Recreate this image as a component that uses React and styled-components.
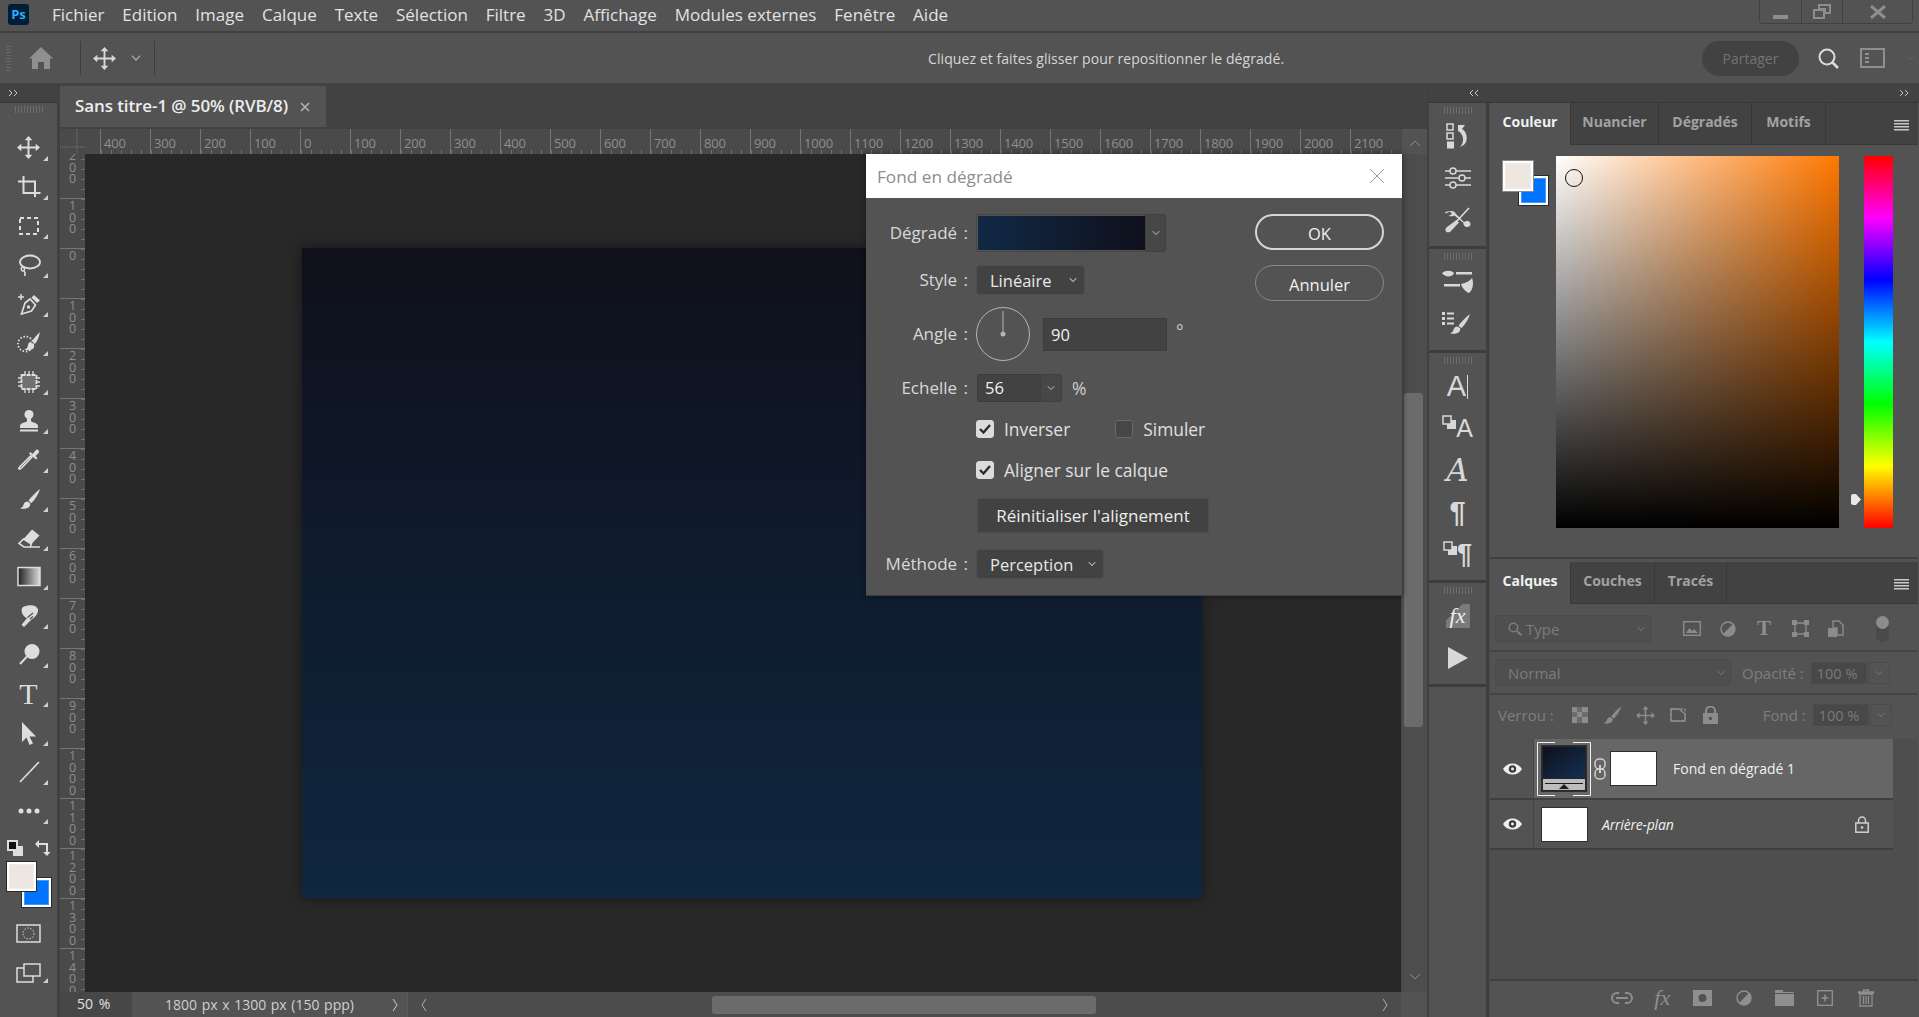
import React from 'react';
import styled, { createGlobalStyle, css } from 'styled-components';

const Global = createGlobalStyle`
  html, body { margin: 0; padding: 0; background: #535353; }
  * { box-sizing: border-box; }
  body { font-family: "Open Sans", "Noto Sans", "Liberation Sans", sans-serif; overflow: hidden; }
`;

const App_ = styled.div`
  position: relative; width: 1919px; height: 1017px; overflow: hidden;
  display: flex; flex-direction: column; background: #535353; color: #ddd;
`;

/* ---------- menu bar ---------- */
const MenuBar = styled.div`
  height: 33px; flex: none; display: flex; align-items: flex-start; padding-left: 8px;
  background: #535353; border-bottom: 2px solid #404040;
`;
const Logo = styled.div`
  width: 21px; height: 21px; margin: 4px 23px 0 0; border-radius: 3px; background: #001e36;
  color: #31a8ff; font: 700 13px/21px "Open Sans", sans-serif; text-align: center;
`;
const MenuList = styled.div`display: flex; gap: 17.9px; height: 29px; align-items: center;`;
const MenuItem = styled.span`font-size: 17px; color: #e2e2e2; line-height: 29px;`;
const WinControls = styled.div`
  margin-left: auto; margin-right: 6px; display: flex; height: 24px;
  border: 1px solid #404040; border-top: 0; border-radius: 0 0 4px 4px;
`;
const WinBtn = styled.div`
  width: ${p => p.$w}px; display: flex; align-items: center; justify-content: center;
  color: #8e8e8e; & + & { border-left: 1px solid #404040; }
`;

/* ---------- options bar ---------- */
const OptionsBar = styled.div`
  height: 51px; flex: none; display: flex; align-items: center; padding: 0 5px 0 6px;
  background: #535353; border-bottom: 1px solid #454545;
`;
const GripV = styled.div`
  width: 5px; height: 26px;
  background: repeating-linear-gradient(0deg, #6a6a6a 0 1px, transparent 1px 3px);
`;
const OptIcon = styled.div`
  margin-left: ${p => p.$ml}px; display: flex; align-items: center; color: ${p => p.$c || '#d8d8d8'};
`;
const OptSep = styled.div`margin-left: ${p => p.$ml}px; width: 1px; height: 34px; background: #3d3d3d;`;
const Hint = styled.div`margin-left: 773px; font-size: 14px; letter-spacing: 0.08px; color: #d6d6d6; white-space: nowrap;`;
const Share = styled.div`
  margin-left: auto; width: 97px; height: 35px; border-radius: 18px; background: #424242;
  color: #727272; font-size: 14px; display: flex; align-items: center; justify-content: center;
`;

/* ---------- workspace ---------- */
const Workspace = styled.div`flex: 1; min-height: 0; display: flex;`;
const LeftDock = styled.div`
  width: 60px; flex: none; display: flex; flex-direction: column; border-right: 3px solid #404040;
`;
const CollapseBar = styled.div`
  height: ${p => p.$h || 19}px; flex: none; background: #424242; color: #c8c8c8; display: flex; align-items: center;
  justify-content: ${p => p.$between ? 'space-between' : 'flex-start'}; padding: ${p => p.$pad || '0 0 0 8px'};
  border-bottom: 1px solid #383838;
`;
const ToolBar = styled.div`flex: 1; display: flex; flex-direction: column; align-items: center; background: #535353;`;
const Grip = styled.div`
  flex: none; height: ${p => p.$h}px; width: 28px; position: relative;
  &::after {
    content: ""; position: absolute; left: 0; right: 0; top: ${p => p.$top}px; height: 7px;
    background: repeating-linear-gradient(90deg, #6c6c6c 0 1px, transparent 1px 3px);
  }
`;
const Tool = styled.div`
  position: relative; width: 57px; height: 39px; flex: none; display: flex; align-items: center; justify-content: center;
  color: #dddddd;
  &::after {
    content: ""; position: absolute; left: 43px; top: 28px; width: 0; height: 0;
    border-left: 5px solid transparent; border-bottom: 5px solid #cfcfcf;
  }
`;
const Svg = styled.svg`display: block; flex: none; fill: currentColor;`;
const ToolGlyph = styled.span`font: 400 ${p => p.$s || 28}px/1 "Liberation Serif", serif; color: #dddddd;`;
const DefaultRow = styled.div`
  width: 44px; height: 16px; margin-top: 10px; flex: none; display: flex; justify-content: space-between; color: #ddd;
`;
const SwatchStack = styled.div`position: relative; width: 44px; height: 45px; margin-top: 6px; flex: none;`;
const Swatch = styled.div`
  position: absolute; left: ${p => p.$x}px; top: ${p => p.$y}px; width: ${p => p.$s}px; height: ${p => p.$s}px;
  background: ${p => p.$c}; border: 2px solid #fff; outline: 1px solid ${p => p.$o || '#2a2a2a'};
  box-shadow: inset 0 0 0 1px rgba(255,255,255,.25);
`;
const ToolLower = styled.div`
  width: 57px; flex: none; margin-top: ${p => p.$mt}px; height: ${p => p.$h}px; position: relative;
  display: flex; justify-content: center; color: #ddd;
  ${p => p.$tri && css`
    &::after {
      content: ""; position: absolute; left: 43px; top: 15px; width: 0; height: 0;
      border-left: 5px solid transparent; border-bottom: 5px solid #cfcfcf;
    }
  `}
`;

/* ---------- document ---------- */
const DocArea = styled.div`width: 1367px; flex: none; display: flex; flex-direction: column; min-height: 0;`;
const TabBar = styled.div`height: 45px; flex: none; background: #424242; padding: 2px 0 2px 0;`;
const DocTab = styled.div`
  width: 266px; height: 41px; background: #535353; display: flex; align-items: center; padding: 0 0 2px 15px;
  font-size: 17px; font-weight: 600; letter-spacing: -0.1px; color: #ededed; white-space: nowrap;
`;
const TabClose = styled.span`margin-left: 12px; margin-top: 3px; display: flex; color: #b5b5b5;`;
const RulerRow = styled.div`height: 25px; flex: none; display: flex;`;
const RulerCorner = styled.div`width: 25px; flex: none; background: #4a4a4a;`;
const HRuler = styled.div`
  flex: 1; min-width: 0; display: flex; padding-left: 15px; background: #4a4a4a; overflow: hidden;
`;
const HCell = styled.div`
  width: 50px; height: 25px; flex: none; padding-left: 3px; border-left: 1px solid #757575; font-size: 13px; line-height: 29px;
  letter-spacing: -0.2px; color: #8e8e8e;
  background: linear-gradient(90deg, #6f6f6f 1px, transparent 1px) left bottom / 10px 4px repeat-x;
`;
const ScrollCap = styled.div`
  width: 26px; flex: none; background: #535353; color: #8c8c8c; display: flex; align-items: center; justify-content: center;
  border-left: 1px solid #474747; padding-top: 3px;
`;
const DocMiddle = styled.div`flex: 1; min-height: 0; display: flex;`;
const VRuler = styled.div`width: 25px; flex: none; background: #4a4a4a; overflow: hidden;`;
const VRulerTrack = styled.div`margin-top: -6px;`;
const VCell = styled.div`
  height: 50px; border-top: 1px solid #757575; padding: 1px 0 0 8px;
  background: linear-gradient(#6f6f6f 1px, transparent 1px) right 0 / 4px 10px repeat-y;
`;
const VLabel = styled.div`
  width: 9px; word-break: break-all; text-align: center; font-size: 12.5px; line-height: 11.5px; color: #8e8e8e;
`;
const Canvas = styled.div`flex: 1; min-width: 0; background: #282828;`;
const Page = styled.div`
  width: 900px; height: 650px; margin: 94px 0 0 217px;
  background: linear-gradient(#0f101b, #0f2740);
  box-shadow: 0 0 12px rgba(0,0,0,.45);
`;
const VScroll = styled.div`
  width: 26px; flex: none; background: #4d4d4d; display: flex; flex-direction: column; border-left: 1px solid #474747;
  color: #8c8c8c; align-items: center; padding-bottom: 11px;
`;
const VThumb = styled.div`width: 19px; height: 334px; margin-top: 239px; margin-left: -2px; background: #6b6b6b; border-radius: 3px; flex: none;`;
const VDown = styled.div`margin-top: auto; display: flex;`;

const StatusBar = styled.div`height: 25px; flex: none; display: flex; align-items: stretch; background: #535353;`;
const ZoomBox = styled.div`
  width: 72px; flex: none; background: #474747; font-size: 14px; color: #e0e0e0; padding-left: 17px; line-height: 24px; word-spacing: 2px;
`;
const DocInfo = styled.div`
  width: 275px; flex: none; padding-left: 33px; font-size: 14px; line-height: 24px; color: #cfcfcf; white-space: nowrap; word-spacing: 1px;
  display: flex; justify-content: space-between; padding-right: 9px; align-items: center;
`;
const HTrack = styled.div`
  flex: 1; min-width: 0; display: flex; align-items: center; background: #4c4c4c; padding: 0 13px 0 13px;
  color: #b0b0b0; border-left: 1px solid #5c5c5c;
`;
const HThumb = styled.div`margin-left: 285px; width: 384px; height: 18px; background: #6b6b6b; border-radius: 3px; flex: none;`;
const HEnd = styled.div`margin-left: auto; display: flex;`;
const StatusCap = styled.div`width: 26px; flex: none; background: #535353;`;

/* ---------- dialog ---------- */
const Dialog = styled.div`
  position: absolute; left: 866px; top: 154px; width: 537px; height: 442px; background: #535353;
  border-right: 1px solid #3e3e3e; border-bottom: 1px solid #3e3e3e; box-shadow: 0 0 6px rgba(0,0,0,.4);
  display: flex; flex-direction: column;
`;
const DialogTitle = styled.div`
  height: 44px; flex: none; background: #fff; display: flex; align-items: center; justify-content: space-between;
  padding: 0 17px 0 11px; font-size: 17.2px; color: #8d8d8d;
`;
const DialogBody = styled.div`flex: 1; display: flex; justify-content: space-between; padding: 16px 18px 0 0;`;
const Form = styled.div`display: flex; flex-direction: column;`;
const Row = styled.div`
  display: grid; grid-template-columns: 110px auto; align-items: center; justify-content: start; align-content: center;
  height: ${p => p.$h}px; margin-top: ${p => p.$mt || 0}px;
`;
const Label = styled.div`
  text-align: right; padding-right: 8px; margin-top: -2px; font-size: 17px; word-spacing: 2px; color: #d8d8d8; white-space: pre;
  grid-column: 1;
`;
const Controls = styled.div`grid-column: 2; display: flex; align-items: center;`;
const GradientField = styled.div`
  width: 169px; height: 38px; border: 1px solid #474747; border-right: 0; padding: 1px 0 1px 1px; display: flex;
  &::before { content: ""; flex: 1; background: linear-gradient(90deg, #112945, #0f101c); }
`;
const DropCell = styled.div`
  width: ${p => p.$w}px; height: ${p => p.$h}px; display: flex; align-items: center; justify-content: center;
  background: #474747; border: 1px solid #3f3f3f; border-radius: 0 3px 3px 0; color: #bdbdbd;
`;
const Select = styled.div`
  width: ${p => p.$w}px; height: 30px; background: #424242; border: 1px solid #4c4c4c; border-radius: 4px;
  display: flex; align-items: center; justify-content: space-between; padding: 0 7px 0 13px; font-size: 16.5px; color: #e8e8e8;
`;
const Dial = styled.div`display: flex; color: #b5b5b5;`;
const AngleInput = styled.div`
  margin-left: 13px; width: 124px; height: 33px; background: #424242; border: 1px solid #3c3c3c;
  font-size: 16.5px; color: #f0f0f0; padding-left: 7px; line-height: 31px;
`;
const Unit = styled.div`margin-left: ${p => p.$ml}px; font-size: 17.5px; color: #cfcfcf; ${p => p.$up && 'transform: translateY(-3px);'}`;
const ScaleInput = styled.div`
  margin-left: 1px; width: 63px; height: 28px; background: #424242; border: 1px solid #3c3c3c; border-right: 0; font-size: 16.5px; color: #f0f0f0;
  padding-left: 7px; line-height: 26px; border-radius: 3px 0 0 3px;
`;
const CheckWrap = styled.div`display: flex; align-items: center; margin-left: ${p => p.$ml || 0}px; font-size: 17.4px; color: #e0e0e0; white-space: nowrap;`;
const CheckBox = styled.div`
  width: 18px; height: 18px; margin-right: 10px; border-radius: 3px; display: flex; align-items: center; justify-content: center; color: #2c2c2c;
  background: ${p => p.$on ? '#dcdcdc' : '#474747'}; border: 1px solid ${p => p.$on ? '#dcdcdc' : '#6a6a6a'};
`;
const FlatButton = styled.div`
  margin-left: 1px; width: 232px; height: 35px; background: #424242; border: 1px solid #4c4c4c; border-radius: 2px;
  display: flex; align-items: center; justify-content: center; font-size: 17px; color: #ececec; white-space: nowrap;
`;
const Actions = styled.div`display: flex; flex-direction: column; gap: 15px; width: 129px;`;
const PillButton = styled.div`
  height: 36px; border-radius: 18px; border: ${p => p.$primary ? '2px solid #d6d6d6' : '1px solid #888'};
  display: flex; align-items: center; justify-content: center; font-size: 16.5px; color: #f0f0f0; padding-top: 3px;
`;

/* ---------- right dock ---------- */
const RightDock = styled.div`
  width: 492px; flex: none; display: flex; flex-direction: column; min-height: 0; border-left: 2px solid #404040;
`;
const RightMain = styled.div`flex: 1; min-height: 0; display: flex;`;
const IconDock = styled.div`width: 57px; flex: none; display: flex; flex-direction: column; background: #535353; border-right: 0;`;
const DockSep = styled.div`width: 4px; flex: none; background: #3f3f3f; border-right: 1px solid #4a4a4a;`;
const DockGroup = styled.div`
  flex: none; display: flex; flex-direction: column; align-items: center; padding-bottom: 5px; border-bottom: 3px solid #3d3d3d;
`;
const DockItem = styled.div`
  height: 42px; width: 57px; flex: none; display: flex; align-items: center; justify-content: center; color: #d8d8d8;
`;
const RaisedGlyph = styled.span`display: flex; transform: translateY(-6px);`;
const Glyph = styled.span`
  font: ${p => p.$i ? 'italic' : 'normal'} ${p => p.$w || 400} ${p => p.$s}px/1 ${p => p.$f || '"Liberation Sans"'}, sans-serif;
  color: ${p => p.$c || '#d8d8d8'};
`;
const Caret = styled.span`display: inline-block; width: 1px; height: 24px; background: #d8d8d8; margin-left: 1px; vertical-align: -3px;`;
const FxTile = styled.div`
  display: flex; align-items: center; justify-content: center; width: 24px; height: 24px;
  background: linear-gradient(135deg, transparent 35%, #7a7a7a 35%);
`;
const Panels = styled.div`width: 428px; flex: none; display: flex; flex-direction: column; min-height: 0;`;
const PanelTabs = styled.div`height: 42px; flex: none; display: flex; background: #424242; align-items: stretch; color: #a0a0a0;`;
const PanelTab = styled.div`
  width: ${p => p.$w}px; flex: none; display: flex; align-items: center; justify-content: center; padding-bottom: 5px;
  font-size: 14px; font-weight: 700;
  background: ${p => p.$on ? '#535353' : 'transparent'}; color: ${p => p.$on ? '#f0f0f0' : '#a2a2a2'};
  border-right: 1px solid #383838; border-bottom: ${p => p.$on ? '0' : '1px solid #383838'};
`;
const TabFill = styled.div`flex: 1; display: flex; align-items: center; justify-content: flex-end; padding: 3px 9px 0 0; border-bottom: 1px solid #383838; color: #c8c8c8;`;
const ColorPanel = styled.div`
  height: 414px; flex: none; display: flex; align-items: flex-start; padding: 11px 0 0 12px; background: #535353;
  border-bottom: 2px solid #404040;
`;
const ColorSwatches = styled.div`position: relative; width: 46px; height: 46px; margin-top: 4px; flex: none;`;
const Picker = styled.div`
  position: relative; margin-left: 8px; width: 283px; height: 372px; flex: none;
  background: linear-gradient(to top, #000, transparent), linear-gradient(to right, #fff, #ff7700);
`;
const PickerDot = styled.div`
  position: absolute; left: 9px; top: 13px; width: 18px; height: 18px; border-radius: 50%;
  border: 1px solid #111; box-shadow: inset 0 0 0 1px rgba(255,255,255,.25);
`;
const HueBar = styled.div`
  position: relative; margin-left: 25px; width: 29px; height: 372px; flex: none;
  background: linear-gradient(#f00, #f0f 16.67%, #00f 33.33%, #0ff 50%, #0f0 66.67%, #ff0 83.33%, #f00);
`;
const HueMark = styled.div`position: absolute; left: -13px; top: 338px; color: #e8e8e8; display: flex;`;

const LayersPanel = styled.div`flex: 1; min-height: 0; display: flex; flex-direction: column; margin-top: 3px;`;
const LayerToolRow = styled.div`
  height: ${p => p.$h}px; flex: none; display: flex; align-items: center; padding: ${p => p.$pad || '0'} 0 ${p => p.$padb || '0'} 5px; color: #8c8c8c;
  ${p => p.$line && 'border-bottom: 2px solid #454545;'}
`;
const DimCombo = styled.div`
  width: ${p => p.$w}px; height: 27px; border: 1px solid #4b4b4b; border-radius: 3px; background: #4f4f4f;
  display: flex; align-items: center; justify-content: space-between; padding: 0 5px 0 12px; font-size: 15px; color: #7c7c7c;
`;
const ComboLead = styled.span`display: flex; align-items: center; gap: 4px;`;
const FilterIcon = styled.div`width: 36px; flex: none; display: flex; justify-content: center; margin-left: ${p => p.$ml || 0}px;`;
const Toggle = styled.div`
  position: relative; width: 13px; height: 26px; margin-left: 22px; border-radius: 7px; background: #4a4a4a;
  &::before { content: ""; position: absolute; left: 0; top: 0; width: 13px; height: 13px; border-radius: 50%; background: #8c8c8c; }
`;
const DimLabel = styled.div`margin-left: ${p => p.$ml}px; font-size: 15px; color: #7f7f7f; white-space: nowrap;`;
const DimValue = styled.div`
  margin-left: ${p => p.$ml}px; width: 56px; height: 22px; background: #484848; border: 1px solid #4c4c4c; font-size: 14.5px; line-height: 21px; padding-left: 5px;
  color: #7a7a7a; white-space: nowrap;
`;
const DimDrop = styled.div`width: 22px; height: 22px; border: 1px solid #4b4b4b; margin-left: 1px; display: flex; align-items: center; justify-content: center; color: #777;`;
const LockIcon = styled.div`width: ${p => p.$w}px; flex: none; display: flex; justify-content: center; margin-left: ${p => p.$ml || 0}px;`;

const LayerList = styled.div`flex: 1; min-height: 0; background: #4e4e4e; display: flex; flex-direction: column;`;
const LayerRow = styled.div`
  width: 403px; height: ${p => p.$h}px; flex: none; display: flex; border-bottom: 2px solid #3f3f3f;
  background: #535353;
`;
const EyeCell = styled.div`
  width: 44px; flex: none; display: flex; align-items: center; justify-content: center; padding-left: 2px; border-right: 1px solid #454545;
`;
const LayerBody = styled.div`
  flex: 1; display: flex; align-items: center; padding-left: 7px; background: ${p => p.$sel ? '#666666' : 'transparent'};
`;
const ThumbFrame = styled.div`position: relative; width: 46px; height: 47px; flex: none; border: 1px solid #2e2e2e;`;
const Corners = styled.svg`position: absolute; left: -5px; top: -4px; display: block; fill: none; stroke: #f2f2f2;`;
const WhiteThumb = styled.div`
  width: ${p => p.$w}px; height: 35px; flex: none; background: #fff; border: 1px solid #2e2e2e;
`;
const ChainCell = styled.div`margin: 0 4px 0 7px; display: flex; color: #d0d0d0;`;
const LayerName = styled.div`margin-left: ${p => p.$ml}px; font-size: 14px; color: #f0f0f0; white-space: nowrap; ${p => p.$i && 'font-style: italic; letter-spacing: -0.2px;'}`;
const RowLock = styled.div`margin-left: auto; margin-right: 24px; display: flex; color: #d0d0d0;`;
const LayerFooter = styled.div`
  height: 38px; flex: none; display: flex; justify-content: flex-end; align-items: center; padding: 0 32px 2px 0;
  background: #535353; border-top: 2px solid #404040; color: #8f8f8f;
`;
const FooterIcon = styled.div`width: 40.7px; flex: none; display: flex; justify-content: center;`;

/* ---------- icon drawings ---------- */
const Sv = ({ w = 24, h = 24, vb, children, ...r }) => (
  <Svg width={w} height={h} viewBox={vb || `0 0 ${w} ${h}`} {...r}>{children}</Svg>
);
const st = { fill: 'none', stroke: 'currentColor' };
const Chev = ({ s = 8 }) => (
  <Sv w={s} h={s} vb="0 0 8 8"><path d="M.8 2.2 4 5.6l3.2-3.4" fill="none" stroke="currentColor" strokeWidth="1" /></Sv>
);
const ChevUp = () => <Sv w={12} h={8} vb="0 0 12 8"><path d="M1 7l5-5 5 5" {...st} /></Sv>;
const ChevDown = () => <Sv w={12} h={8} vb="0 0 12 8"><path d="M1 1l5 5 5-5" {...st} /></Sv>;
const ChevL = () => <Sv w={6} h={14} vb="0 0 6 14"><path d="M5 1 1 7l4 6" {...st} /></Sv>;
const ChevR = ({ h = 14 }) => <Sv w={6} h={h} vb="0 0 6 14"><path d="M1 1l4 6-4 6" {...st} /></Sv>;
const Dbl = ({ left }) => (
  <Sv w={11} h={8} vb="0 0 11 8">
    <path d={left ? 'M5 1 2 4l3 3M10 1 7 4l3 3' : 'M1 1l3 3-3 3M6 1l3 3-3 3'} {...st} />
  </Sv>
);
const Burger = () => (
  <Sv w={15} h={11} vb="0 0 15 11"><path d="M0 0h15v1.4H0zM0 3h15v1.4H0zM0 6h15v1.4H0zM0 9h15v1.4H0z" /></Sv>
);
const MoveIco = ({ s = 24 }) => (
  <Sv w={s} h={s} vb="0 0 24 24">
    <path d="M12 0l4 4.500h-3v6.500h6.500V8l4.500 4-4.500 4v-3H13v6.500h3L12 24l-4-4.500h3V13H4.500v3L0 12l4.500-4v3H11V4.500H8z" />
  </Sv>
);
const BrushPath = ({ x = 0, y = 0, k = 1 }) => (
  <g transform={`translate(${x} ${y}) scale(${k})`}>
    <path d="M22 2C18 5 13.500 9.500 10.500 13.500l2.800 2.700C17 12.500 20.500 7.500 22 2z" />
    <path d="M9.500 14.500c-3.200.1-3.500 2.300-4.300 4C4.600 19.800 3.500 20.800 2 21.500c3.500.8 7.500.3 9.300-1.700 1.100-1.300 1.200-2.900.6-3.700z" />
  </g>
);
const tools = [
  <MoveIco s={23} />,
  <Sv><path d="M6.500 1v17h17M1 6.500h17V22" {...st} strokeWidth="2" /></Sv>,
  <Sv><rect x="3" y="4" width="18" height="16" {...st} strokeWidth="2" strokeDasharray="4 3" /></Sv>,
  <Sv><ellipse cx="13" cy="9" rx="10" ry="6.500" {...st} strokeWidth="1.800" /><path d="M5.500 14c-2 1-1.500 4 .5 4s2-3 0-4M7 18c1.500 1.500 1.500 3 .5 5" {...st} strokeWidth="1.500" /></Sv>,
  <Sv><path d="M1 5h6M4 2v6" {...st} strokeWidth="1.500" /><path d="M17 3l6 5.500-3 2.500-5.500-5.500z" /><path d="M13 7l-5 4L4.500 22l10-3 4-6z" {...st} strokeWidth="1.700" /><circle cx="11.500" cy="15" r="1.700" /></Sv>,
  <Sv><circle cx="8.500" cy="13" r="7.500" {...st} strokeWidth="1.800" strokeDasharray="1.500 1.800" /><path d="M23 1c-3 3-6 6-8 9l3 3c2.500-3 4-7 5-12z" /><path d="M13.500 11c-3 .5-2 3.500-3.200 5.500-.7 1-1.600 1.700-2.800 2.200 3.500 1 7.500.5 9-1.500 1-1.500 1-3-.1-4z" /></Sv>,
  <Sv><rect x="4.500" y="5" width="15" height="14" fill="#717171" stroke="currentColor" strokeWidth="1.800" strokeDasharray="4 1" /><path d="M8 1v4M12 1v4M16 1v4M8 19v4M12 19v4M16 19v4M1 8h4M1 12h4M1 16h4M19 8h4M19 12h4M19 16h4" {...st} strokeWidth="1.300" /></Sv>,
  <Sv><circle cx="12" cy="5.500" r="4.500" /><path d="M10 9h4v3c0 1.500 7 1.500 7 5v2H3v-2c0-3.500 7-3.500 7-5z" /><rect x="3" y="20.500" width="18" height="2" /></Sv>,
  <Sv><path d="M15 9 5 19.500c-1.500 1.500-2.500 2-3 1.500s0-1.500 1.500-3L13.500 8z" {...st} strokeWidth="1.700" /><path d="M12 5.500l1.500-1.500 2 2 3.500-4c1-1 3.500 0 3 2.500l-3.500 3.500 2 2-1.500 1.500z" /></Sv>,
  <Sv><BrushPath x={1} y={0} /></Sv>,
  <Sv><path d="M6.500 13 15 3.500l7.500 6-8.500 9z" /><path d="M6.500 13 2 17.500 7 21h6l1.500-3-8-5z" {...st} strokeWidth="1.600" /><path d="M13 21h10" {...st} strokeWidth="1.500" /></Sv>,
  <Sv><defs><linearGradient id="tg"><stop offset="0" stopColor="#1f1f1f" /><stop offset="1" stopColor="#dcdcdc" /></linearGradient></defs><rect x="1" y="2.500" width="22" height="18" fill="url(#tg)" stroke="#dcdcdc" strokeWidth="1.500" /></Sv>,
  <Sv><path d="M5 4C9 0 20 0 21 5.500c.5 4-3 8-6.500 10l-7.500 7.500-2.500-2.300 5.500-6.500C6.500 13 3.500 8 5 4z" /><path d="M10.500 13.500 16 9M13 15l3-2.500" stroke="#535353" fill="none" strokeWidth="1.300" /></Sv>,
  <Sv><circle cx="15" cy="8.500" r="7.500" /><path d="M10 13.500 3 21" {...st} strokeWidth="2" /></Sv>,
  <ToolGlyph $s={30}>T</ToolGlyph>,
  <Sv><path d="M5 1l14 14.500h-6.500l3.500 7-3.500 1.500-3-7.500L5 21z" /></Sv>,
  <Sv><path d="M3 22 22 2" {...st} strokeWidth="1.700" /></Sv>,
  <Sv><circle cx="4" cy="12" r="2.500" /><circle cx="12" cy="12" r="2.500" /><circle cx="20" cy="12" r="2.500" /></Sv>,
];

const Eye = () => (
  <Sv w={19} h={12} vb="0 0 23 14">
    <path d="M0 7c5-9 18-9 23 0-5 9-18 9-23 0z" fill="#efefef" />
    <circle cx="11.500" cy="7" r="4.500" fill="#3d3d3d" />
    <circle cx="11.500" cy="7" r="1.800" fill="#efefef" />
  </Sv>
);
const MiniSquares = () => (
  <Sv w={14} h={14} vb="0 0 14 14">
    <rect x="5" y="5" width="9" height="9" /><rect x="1" y="1" width="8" height="8" fill="#535353" stroke="currentColor" strokeWidth="1.500" />
  </Sv>
);
const Tick = () => (
  <Sv w={12} h={10} vb="0 0 12 10"><path d="M1 5l3.500 3.500L11 1" {...st} strokeWidth="2.400" /></Sv>
);

const App = () => {
  const rulerH = [400, 300, 200, 100, 0, ...Array.from({ length: 21 }, (_, i) => (i + 1) * 100)];
  const rulerV = [200, 100, 0, ...Array.from({ length: 14 }, (_, i) => (i + 1) * 100)];
  return (
    <App_>
      <Global />
      <MenuBar>
        <Logo>Ps</Logo>
        <MenuList>
          {['Fichier', 'Edition', 'Image', 'Calque', 'Texte', 'Sélection', 'Filtre', '3D', 'Affichage', 'Modules externes', 'Fenêtre', 'Aide'].map(m => <MenuItem key={m}>{m}</MenuItem>)}
        </MenuList>
        <WinControls>
          <WinBtn $w={41}><Sv w={15} h={16} vb="0 0 15 16"><rect y="11" width="15" height="4" /></Sv></WinBtn>
          <WinBtn $w={41}><Sv w={18} h={15} vb="0 0 18 15"><path d="M6 1h11v8h-5V5H6z" {...st} strokeWidth="2" /><rect x="1" y="6" width="10" height="8" {...st} strokeWidth="2" /></Sv></WinBtn>
          <WinBtn $w={70}><Sv w={16} h={14} vb="0 0 16 14"><path d="M1 1l14 12M15 1 1 13" {...st} strokeWidth="3" /></Sv></WinBtn>
        </WinControls>
      </MenuBar>

      <OptionsBar>
        <GripV />
        <OptIcon $ml={18} $c="#8f8f8f">
          <Sv w={24} h={22} vb="0 0 24 22"><path d="M12 0 24 11.500h-3V22h-6v-7H9v7H3V11.500H0z" /></Sv>
        </OptIcon>
        <OptSep $ml={27} />
        <OptIcon $ml={12}><MoveIco s={23} /></OptIcon>
        <OptIcon $ml={15} $c="#a8a8a8"><Chev s={10} /></OptIcon>
        <OptSep $ml={13} />
        <Hint>Cliquez et faites glisser pour repositionner le dégradé.</Hint>
        <Share>Partager</Share>
        <OptIcon $ml={19} $c="#dcdcdc">
          <Sv w={21} h={21} vb="0 0 21 21"><circle cx="9" cy="9" r="7.500" {...st} strokeWidth="2" /><path d="M14.500 14.500 20 20" {...st} strokeWidth="2.600" /></Sv>
        </OptIcon>
        <OptIcon $ml={21} $c="#8f8f8f">
          <Sv w={25} h={20} vb="0 0 25 20"><rect x="1" y="1" width="23" height="18" {...st} strokeWidth="2" /><path d="M5 5h4v2H5zM5 9h4v2H5zM5 13h4v2H5z" /></Sv>
        </OptIcon>
        <OptIcon $ml={21} $c="#666"><Chev s={8} /></OptIcon>
      </OptionsBar>

      <Workspace>
        <LeftDock>
          <CollapseBar><Dbl /></CollapseBar>
          <ToolBar>
            <Grip $h={25} $top={3} />
            {tools.map((t, i) => <Tool key={i}>{t}</Tool>)}
            <DefaultRow>
              <Sv w={16} h={16} vb="0 0 16 16"><rect x="6" y="6" width="10" height="10" /><rect x="1" y="1" width="9" height="9" fill="#111" stroke="#ddd" strokeWidth="2" /></Sv>
              <Sv w={16} h={16} vb="0 0 16 16"><path d="M0 4l4-4v3h9v9h2.500L12 16l-4-4h3V5H4v3z" /></Sv>
            </DefaultRow>
            <SwatchStack>
              <Swatch $x={15} $y={16} $s={29} $c="#0074ff" />
              <Swatch $x={0} $y={0} $s={29} $c="#ede6e1" />
            </SwatchStack>
            <ToolLower $mt={17} $h={19}>
              <Sv w={25} h={19} vb="0 0 25 19"><rect x="1" y="1" width="23" height="17" {...st} strokeWidth="1.500" /><circle cx="12.500" cy="9.500" r="5.500" {...st} strokeDasharray="1.500 1.500" /></Sv>
            </ToolLower>
            <ToolLower $mt={20} $h={20} $tri>
              <Sv w={25} h={20} vb="0 0 25 20"><rect x="8" y="1" width="16" height="12" {...st} strokeWidth="1.500" /><path d="M8 5H1v14h16v-6" {...st} strokeWidth="1.500" /></Sv>
            </ToolLower>
          </ToolBar>
        </LeftDock>

        <DocArea>
          <TabBar>
            <DocTab>
              Sans titre-1 @ 50% (RVB/8)
              <TabClose><Sv w={10} h={10} vb="0 0 10 10"><path d="M1 1l8 8M9 1 1 9" {...st} strokeWidth="1.500" /></Sv></TabClose>
            </DocTab>
          </TabBar>
          <RulerRow>
            <RulerCorner>
              <Sv w={25} h={25} vb="0 0 25 25"><path d="M0 18h25M17 0v25" fill="none" stroke="#7d7d7d" strokeDasharray="1 1" /></Sv>
            </RulerCorner>
            <HRuler>{rulerH.map((n, i) => <HCell key={i}>{n}</HCell>)}</HRuler>
            <ScrollCap><ChevUp /></ScrollCap>
          </RulerRow>
          <DocMiddle>
            <VRuler>
              <VRulerTrack>{rulerV.map((n, i) => <VCell key={i}><VLabel>{n}</VLabel></VCell>)}</VRulerTrack>
            </VRuler>
            <Canvas><Page /></Canvas>
            <VScroll>
              <VThumb />
              <VDown><ChevDown /></VDown>
            </VScroll>
          </DocMiddle>
          <StatusBar>
            <ZoomBox>50 %</ZoomBox>
            <DocInfo>
              <span>1800 px x 1300 px (150 ppp)</span>
              <ChevR h={20} />
            </DocInfo>
            <HTrack>
              <ChevL />
              <HThumb />
              <HEnd><ChevR /></HEnd>
            </HTrack>
            <StatusCap />
          </StatusBar>
        </DocArea>

        <RightDock>
          <CollapseBar $between $pad="0 9px 0 39px"><Dbl left /><Dbl /></CollapseBar>
          <RightMain>
            <IconDock>
              <DockGroup>
                <Grip $h={12} $top={4} />
                <DockItem>
                  <Sv w={24} h={26} vb="0 0 24 26">
                    <rect x="1" y="1" width="6" height="6" {...st} strokeWidth="1.500" /><rect x="1" y="10" width="6" height="6" {...st} strokeWidth="1.500" /><rect x="1" y="18.500" width="7" height="7" />
                    <path d="M12 2h7l-3 4c4 2 6 8 4 13-1 2-3 4-6 5 3-3 4-8 2-12-1-2-2-3-4-4z" />
                  </Sv>
                </DockItem>
                <DockItem>
                  <Sv w={26} h={22} vb="0 0 26 22">
                    <path d="M0 4h5M11 4h15M0 11h14M20 11h6M0 18h5M11 18h15" {...st} strokeWidth="1.500" />
                    <circle cx="8" cy="4" r="3" {...st} strokeWidth="1.500" /><circle cx="17" cy="11" r="3" {...st} strokeWidth="1.500" /><circle cx="8" cy="18" r="3" {...st} strokeWidth="1.500" />
                  </Sv>
                </DockItem>
                <DockItem>
                  <Sv w={28} h={26} vb="0 0 28 26">
                    <path d="M25 1 12 15" {...st} strokeWidth="1.700" /><path d="M12.500 13l2.500 2.500-8.500 9c-1.500 1.500-4.500 1-5-1-.3-1.300.3-2.300 1.500-3.500z" />
                    <path d="M1 5l5-1c3-.5 5 .5 6 3l8 8 2.500-1c2.500-.5 4 1 4 3s-2 3.500-4 3-3.500-2.500-3-4l-9-7.500c-2 1-4 1-6 .5l3.500-2-2-2.500-4 2z" />
                  </Sv>
                </DockItem>
              </DockGroup>
              <DockGroup>
                <Grip $h={12} $top={4} />
                <DockItem>
                  <Sv w={32} h={24} vb="0 0 32 24">
                    <path d="M0 3c4-3 9-3 12 0-1 4-9 5-12 0z" /><rect x="14" y="2" width="16" height="2.500" />
                    <rect x="2" y="14" width="16" height="2.500" /><path d="M19 14c5-1 9-3 11-6 2 5 1 12-3 15-3-1-7-5-8-9z" />
                  </Sv>
                </DockItem>
                <DockItem>
                  <Sv w={32} h={26} vb="0 0 32 26">
                    <path d="M0 1h3v3H0zM0 6h3v3H0zM0 11h3v3H0zM5 1.500h7v2H5zM5 6.500h7v2H5zM5 11.500h7v2H5z" />
                    <g transform="translate(6 1)"><BrushPath /></g>
                  </Sv>
                </DockItem>
              </DockGroup>
              <DockGroup>
                <Grip $h={12} $top={4} />
                <DockItem><Glyph $s={29}>A<Caret /></Glyph></DockItem>
                <DockItem><RaisedGlyph><MiniSquares /></RaisedGlyph><Glyph $s={25}>A</Glyph></DockItem>
                <DockItem><Glyph $s={31} $i $f='"DejaVu Serif"'>A</Glyph></DockItem>
                <DockItem><Glyph $s={29} $w={700}>¶</Glyph></DockItem>
                <DockItem><RaisedGlyph><MiniSquares /></RaisedGlyph><Glyph $s={27} $w={700}>¶</Glyph></DockItem>
              </DockGroup>
              <DockGroup>
                <Grip $h={12} $top={4} />
                <DockItem><FxTile><Glyph $s={22} $i $f='"Liberation Serif"' $c="#f0f0f0">fx</Glyph></FxTile></DockItem>
                <DockItem><Sv w={20} h={22} vb="0 0 20 22"><path d="M0 0l20 11L0 22z" /></Sv></DockItem>
              </DockGroup>
            </IconDock>
            <DockSep />
            <Panels>
              <PanelTabs>
                <PanelTab $w={81} $on>Couleur</PanelTab>
                <PanelTab $w={88}>Nuancier</PanelTab>
                <PanelTab $w={93}>Dégradés</PanelTab>
                <PanelTab $w={74}>Motifs</PanelTab>
                <TabFill><Burger /></TabFill>
              </PanelTabs>
              <ColorPanel>
                <ColorSwatches>
                  <Swatch $x={17} $y={16} $s={29} $c="#0074ff" />
                  <Swatch $x={1} $y={1} $s={30} $c="#ede6e1" $o="#8a8a8a" />
                </ColorSwatches>
                <Picker><PickerDot /></Picker>
                <HueBar>
                  <HueMark>
                    <Sv w={10} h={11} vb="0 0 10 11"><path d="M2 0h3l5 5.500L5 11H2c-1 0-2-1-2-2V2c0-1 1-2 2-2z" /></Sv>
                  </HueMark>
                </HueBar>
              </ColorPanel>
              <LayersPanel>
                <PanelTabs>
                  <PanelTab $w={81} $on>Calques</PanelTab>
                  <PanelTab $w={84}>Couches</PanelTab>
                  <PanelTab $w={72}>Tracés</PanelTab>
                  <TabFill><Burger /></TabFill>
                </PanelTabs>
                <LayerToolRow $h={48} $line $pad="3px">
                  <DimCombo $w={156}>
                    <ComboLead>
                      <Sv w={14} h={14} vb="0 0 14 14"><circle cx="5.500" cy="5.500" r="4.300" {...st} strokeWidth="1.600" /><path d="M9 9l4.500 4.500" {...st} strokeWidth="2" /></Sv>
                      Type
                    </ComboLead>
                    <Chev />
                  </DimCombo>
                  <FilterIcon $ml={23}><Sv w={18} h={15} vb="0 0 18 15"><rect x=".7" y=".7" width="16.600" height="13.600" {...st} strokeWidth="1.400" /><path d="M3 12l3.500-5 2.500 3 2-2 4 4z" /></Sv></FilterIcon>
                  <FilterIcon><Sv w={16} h={16} vb="0 0 16 16"><circle cx="8" cy="8" r="7" {...st} strokeWidth="1.400" /><path d="M13 3A7 7 0 0 1 3 13z" /></Sv></FilterIcon>
                  <FilterIcon><Glyph $s={21} $w={700} $f='"Liberation Serif"' $c="#8f8f8f">T</Glyph></FilterIcon>
                  <FilterIcon><Sv w={17} h={17} vb="0 0 17 17"><path d="M3 3h11v11H3z" {...st} strokeWidth="1.400" /><path d="M0 0h5v5H0zM12 0h5v5h-5zM0 12h5v5H0zM12 12h5v5h-5z" /></Sv></FilterIcon>
                  <FilterIcon><Sv w={16} h={17} vb="0 0 16 17"><path d="M5 1h6l4 4v10H9V8H5z" {...st} strokeWidth="1.400" /><rect x="0" y="8" width="9" height="9" /></Sv></FilterIcon>
                  <Toggle />
                </LayerToolRow>
                <LayerToolRow $h={43} $line>
                  <DimCombo $w={236}>Normal<Chev /></DimCombo>
                  <DimLabel $ml={11}>Opacité :</DimLabel>
                  <DimValue $ml={7}>100 %</DimValue>
                  <DimDrop><Chev /></DimDrop>
                </LayerToolRow>
                <LayerToolRow $h={44} $padb="4px">
                  <DimLabel $ml={3}>Verrou :</DimLabel>
                  <LockIcon $w={32} $ml={10}><Sv w={16} h={16} vb="0 0 16 16"><path d="M0 0h16v16H0z" fill="#6c6c6c" /><path d="M0 0h5v5H0zM10 0h6v5h-6zM5 5h5v5H5zM0 10h5v6H0zM10 10h6v6h-6z" /></Sv></LockIcon>
                  <LockIcon $w={34}><Svg width="21" height="24" viewBox="0 0 24 24"><BrushPath /></Svg></LockIcon>
                  <LockIcon $w={31}><MoveIco s={19} /></LockIcon>
                  <LockIcon $w={35}><Sv w={21} h={18} vb="0 0 21 18"><path d="M3 3h14v12H3z" {...st} strokeWidth="1.400" strokeDasharray="3 1.500" /><path d="M3 3h8l6 5v7H3z" fill="none" stroke="currentColor" strokeWidth="1.400" /></Sv></LockIcon>
                  <LockIcon $w={30}><Sv w={15} h={18} vb="0 0 15 18"><path d="M3 8V5a4.500 4.500 0 0 1 9 0v3" {...st} strokeWidth="2" /><path d="M0 7h15v11H0z" /><circle cx="7.500" cy="12.500" r="1.700" fill="#535353" /></Sv></LockIcon>
                  <DimLabel $ml={37}>Fond :</DimLabel>
                  <DimValue $ml={7}>100 %</DimValue>
                  <DimDrop><Chev /></DimDrop>
                </LayerToolRow>
                <LayerList>
                  <LayerRow $h={61}>
                    <EyeCell><Eye /></EyeCell>
                    <LayerBody $sel>
                      <ThumbFrame>
                        <Sv w={44} h={45} vb="0 0 44 45">
                          <defs><linearGradient id="lg" x1="0" y1="0" x2="1" y2="1"><stop offset="0" stopColor="#0f101c" /><stop offset="1" stopColor="#123050" /></linearGradient></defs>
                          <rect width="44" height="45" fill="#262626" />
                          <rect x="1" y="1" width="42" height="31" fill="url(#lg)" />
                          <rect x="1" y="33" width="42" height="11" fill="#bdbdbd" />
                          <path d="M3 37h38v1H3z" fill="#1c1c1c" /><path d="M22 38l5 5H17z" fill="#1c1c1c" />
                        </Sv>
                        <Corners width="54" height="54" viewBox="0 0 54 54">
                          <path d="M18 .5H.5v53H18M36 .5h17.500v53H36" />
                        </Corners>
                      </ThumbFrame>
                      <ChainCell>
                        <Sv w={12} h={22} vb="0 0 12 22"><rect x="1" y="1" width="10" height="10" rx="4" {...st} strokeWidth="1.500" /><rect x="1" y="11" width="10" height="10" rx="4" {...st} strokeWidth="1.500" /><path d="M6 7v8" {...st} strokeWidth="2" /></Sv>
                      </ChainCell>
                      <WhiteThumb $w={47} />
                      <LayerName $ml={16}>Fond en dégradé 1</LayerName>
                    </LayerBody>
                  </LayerRow>
                  <LayerRow $h={50}>
                    <EyeCell><Eye /></EyeCell>
                    <LayerBody>
                      <WhiteThumb $w={47} />
                      <LayerName $ml={14} $i>Arrière-plan</LayerName>
                      <RowLock>
                        <Sv w={14} h={17} vb="0 0 14 17"><path d="M3.500 7V4.500a3.500 3.500 0 0 1 7 0V7" {...st} strokeWidth="1.500" /><rect x=".8" y="7" width="12.400" height="9.200" {...st} strokeWidth="1.500" /><circle cx="7" cy="11.500" r="1.300" /></Sv>
                      </RowLock>
                    </LayerBody>
                  </LayerRow>
                </LayerList>
                <LayerFooter>
                  <FooterIcon><Sv w={22} h={12} vb="0 0 22 12"><path d="M8 1H6a5 5 0 0 0 0 10h2M14 1h2a5 5 0 0 1 0 10h-2M5 6h12" {...st} strokeWidth="2" /></Sv></FooterIcon>
                  <FooterIcon><Glyph $s={22} $i $f='"Liberation Serif"' $c="#8f8f8f">fx</Glyph></FooterIcon>
                  <FooterIcon><Sv w={19} h={16} vb="0 0 19 16"><path fillRule="evenodd" d="M0 0h19v16H0zM9.500 4a4 4 0 1 0 0 8 4 4 0 0 0 0-8z" /></Sv></FooterIcon>
                  <FooterIcon><Sv w={16} h={16} vb="0 0 16 16"><circle cx="8" cy="8" r="7" {...st} strokeWidth="1.400" /><path d="M13 3A7 7 0 0 1 3 13z" /></Sv></FooterIcon>
                  <FooterIcon><Sv w={19} h={16} vb="0 0 19 16"><path d="M0 0h8v2h11v1H0zM0 4h19v12H0z" /></Sv></FooterIcon>
                  <FooterIcon><Sv w={16} h={16} vb="0 0 16 16"><rect x=".7" y=".7" width="14.600" height="14.600" {...st} strokeWidth="1.400" /><path d="M8 4.500v7M4.500 8h7" {...st} strokeWidth="1.600" /></Sv></FooterIcon>
                  <FooterIcon><Sv w={16} h={18} vb="0 0 16 18"><path d="M0 3h16v1.400H0zM5.500 3V1h5v2M2 5h12v12H2zM5.500 7v8M8 7v8M10.500 7v8" {...st} strokeWidth="1.300" /></Sv></FooterIcon>
                </LayerFooter>
              </LayersPanel>
            </Panels>
          </RightMain>
        </RightDock>
      </Workspace>

      <Dialog>
        <DialogTitle>
          Fond en dégradé
          <Sv w={16} h={16} vb="0 0 16 16"><path d="M1 1l14 14M15 1 1 15" fill="none" stroke="#9a9a9a" /></Sv>
        </DialogTitle>
        <DialogBody>
          <Form>
            <Row $h={38}>
              <Label>Dégradé :</Label>
              <Controls>
                <GradientField />
                <DropCell $w={21} $h={38}><Chev /></DropCell>
              </Controls>
            </Row>
            <Row $h={30} $mt={13}>
              <Label>Style :</Label>
              <Controls><Select $w={109}>Linéaire<Chev /></Select></Controls>
            </Row>
            <Row $h={54} $mt={12}>
              <Label>Angle :</Label>
              <Controls>
                <Dial>
                  <Sv w={54} h={54} vb="0 0 54 54">
                    <circle cx="27" cy="27" r="26.500" fill="none" stroke="currentColor" />
                    <path d="M27 4v23" fill="none" stroke="currentColor" /><circle cx="27" cy="27" r="2.500" />
                  </Sv>
                </Dial>
                <AngleInput>90</AngleInput>
                <Unit $ml={9} $up>°</Unit>
              </Controls>
            </Row>
            <Row $h={28} $mt={13}>
              <Label>Echelle :</Label>
              <Controls>
                <ScaleInput>56</ScaleInput>
                <DropCell $w={22} $h={28}><Chev /></DropCell>
                <Unit $ml={10}>%</Unit>
              </Controls>
            </Row>
            <Row $h={18} $mt={18}>
              <Controls>
                <CheckWrap><CheckBox $on><Tick /></CheckBox>Inverser</CheckWrap>
                <CheckWrap $ml={45}><CheckBox />Simuler</CheckWrap>
              </Controls>
            </Row>
            <Row $h={18} $mt={23}>
              <Controls>
                <CheckWrap><CheckBox $on><Tick /></CheckBox>Aligner sur le calque</CheckWrap>
              </Controls>
            </Row>
            <Row $h={35} $mt={19}>
              <Controls><FlatButton>Réinitialiser l'alignement</FlatButton></Controls>
            </Row>
            <Row $h={30} $mt={16}>
              <Label>Méthode :</Label>
              <Controls><Select $w={128}>Perception<Chev /></Select></Controls>
            </Row>
          </Form>
          <Actions>
            <PillButton $primary>OK</PillButton>
            <PillButton>Annuler</PillButton>
          </Actions>
        </DialogBody>
      </Dialog>
    </App_>
  );
};

export default App;
